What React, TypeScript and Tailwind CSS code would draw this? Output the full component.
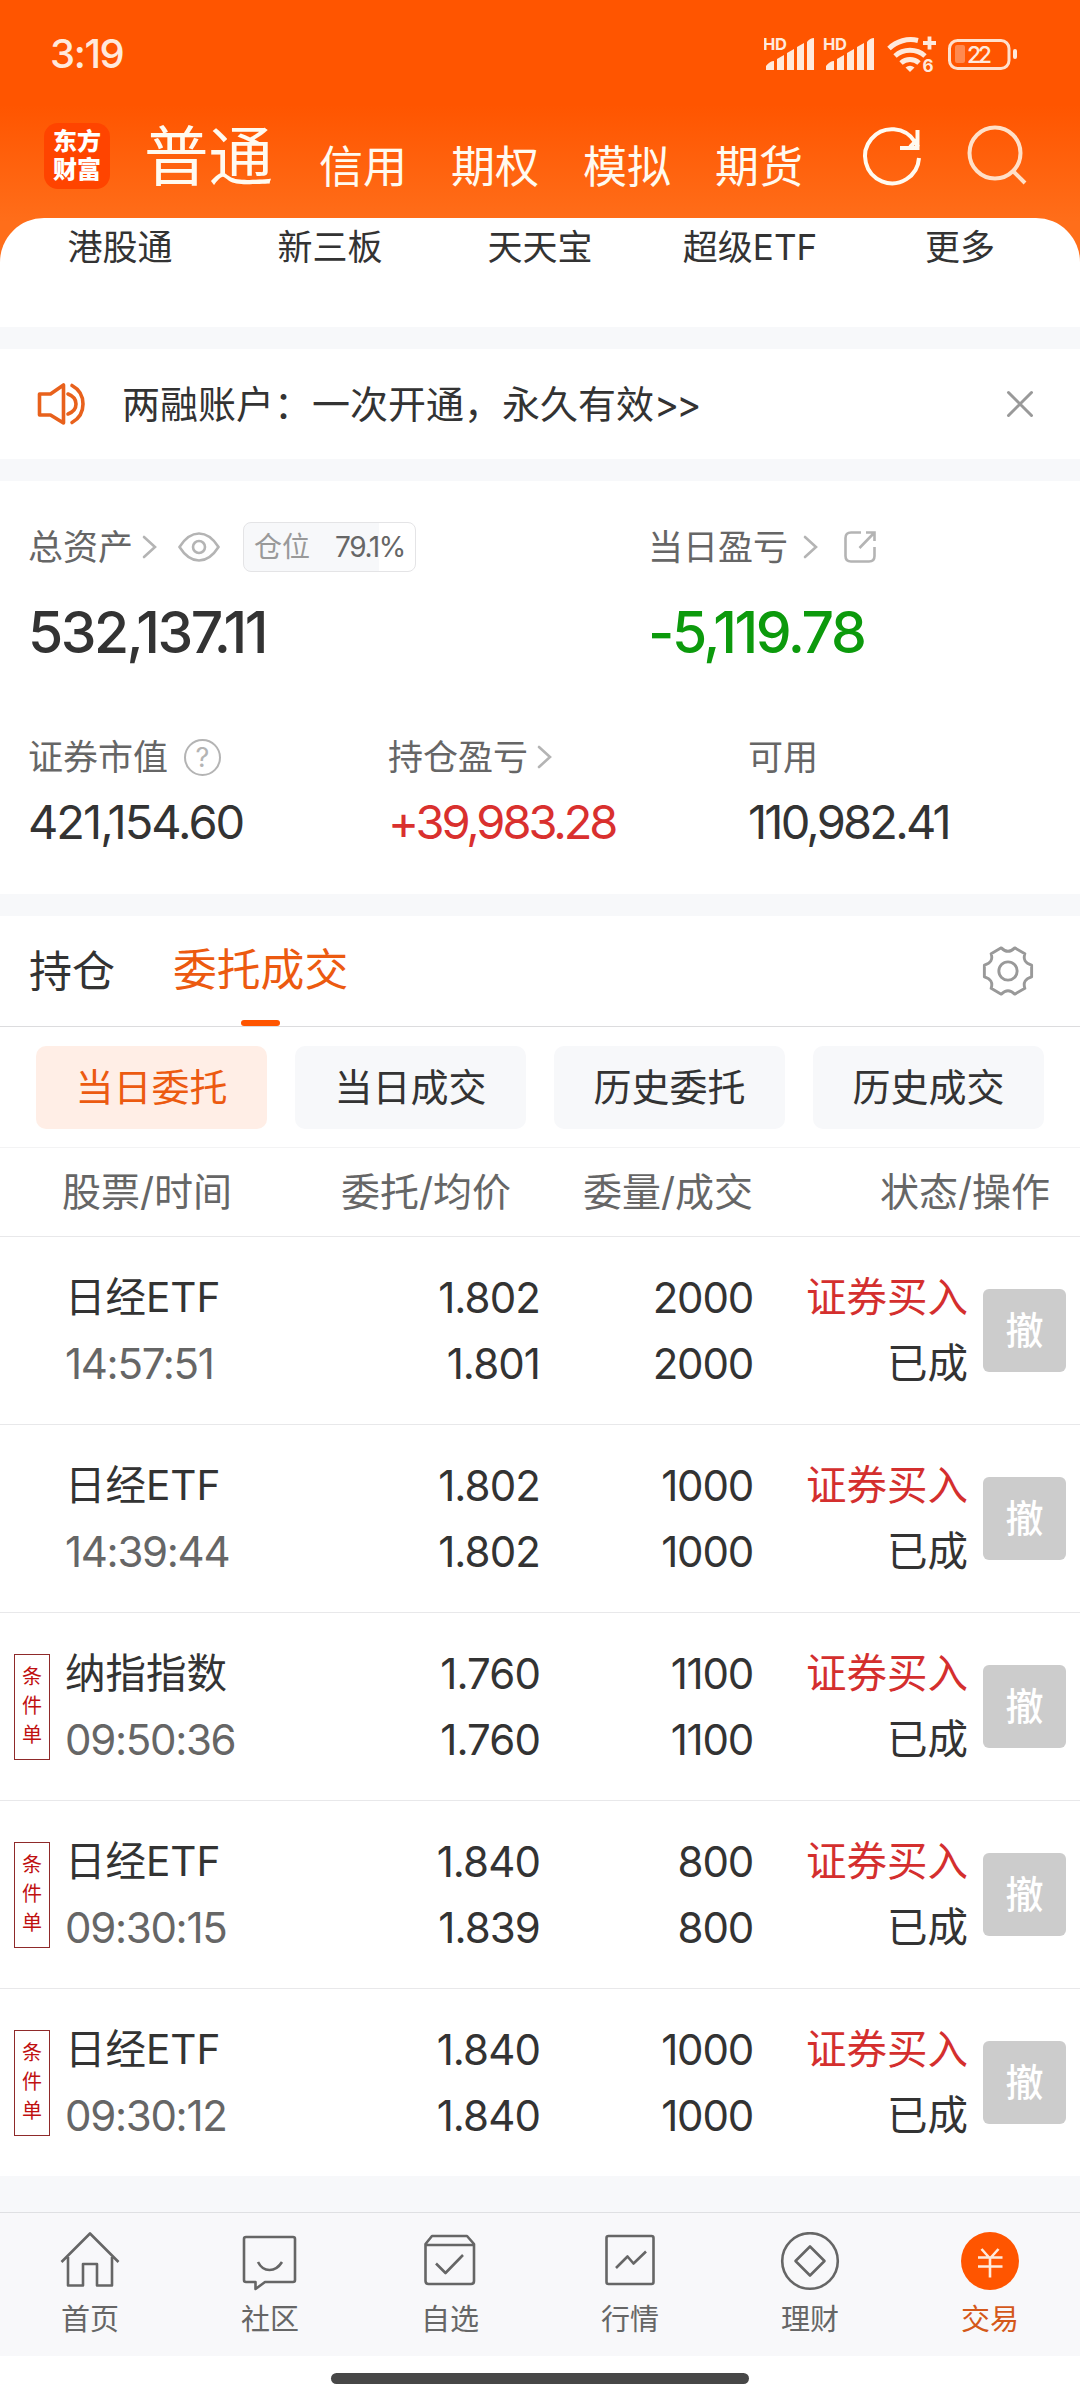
import React from "react";

const shortcuts = ["港股通", "新三板", "天天宝", "超级ETF", "更多"];
const accounts = ["信用", "期权", "模拟", "期货"];
const filters = ["当日委托", "当日成交", "历史委托", "历史成交"];

type Order = {
  name: string;
  time: string;
  price: string;
  avg: string;
  amount: string;
  filled: string;
  conditional?: boolean;
};

const orders: Order[] = [
  { name: "日经ETF", time: "14:57:51", price: "1.802", avg: "1.801", amount: "2000", filled: "2000" },
  { name: "日经ETF", time: "14:39:44", price: "1.802", avg: "1.802", amount: "1000", filled: "1000" },
  { name: "纳指指数", time: "09:50:36", price: "1.760", avg: "1.760", amount: "1100", filled: "1100", conditional: true },
  { name: "日经ETF", time: "09:30:15", price: "1.840", avg: "1.839", amount: "800", filled: "800", conditional: true },
  { name: "日经ETF", time: "09:30:12", price: "1.840", avg: "1.840", amount: "1000", filled: "1000", conditional: true },
];

const Signal = ({ x }: { x: number }) => (
  <g transform={`translate(${x} 0)`}>
    <text x="-1" y="30" fontSize="16.5" fontWeight="700" textLength="24">
      HD
    </text>
    <path d="M2 50v-4q4-5 8-5v9q0 0-1 0zM13 50V39l7-4v15zM23 50V33l7-4v21zM33 50V27l7-4v27zM43 50V22q3-4 7-4v32z" />
  </g>
);

const StatusIcons = () => (
  <svg width="254" height="60" viewBox="0 0 254 60" fill="#ffe9dc">
    <Signal x={0} />
    <Signal x={60} />
    <g fill="none" stroke="#ffe9dc" strokeWidth="5">
      <path d="M125 28.500a31 31 0 0 1 29-8" />
      <path d="M131 36a22.500 22.500 0 0 1 30 0" />
      <path d="M137 43a13.500 13.500 0 0 1 18 0" />
      <path d="M159 23h13M165.500 16.500v13" strokeWidth="3.800" />
    </g>
    <path d="M141.500 47.500q4.500-3.500 9 0L146 52z" />
    <text x="158.500" y="52" fontSize="17" fontWeight="700">
      6
    </text>
    <rect x="185.500" y="20.500" width="59.500" height="28" rx="8" fill="none" stroke="#ffe0cc" strokeWidth="3" />
    <rect x="191" y="25" width="10" height="18" rx="2" fill="#ff8a50" />
    <rect x="249" y="29" width="4" height="10" rx="2" />
    <text x="203" y="43" fontSize="23" fontWeight="500" textLength="25">
      22
    </text>
  </svg>
);

const Header = () => (
  <header className="h-[262px] bg-[linear-gradient(#ff5500_40%,#ff6e1a_85%)]">
    <div className="flex h-[109px] items-start justify-between pl-[50px] pr-[62px]">
      <span className="mt-[34px] text-[40px] font-medium leading-[40px] tracking-[-1.400px] text-[#ffe9dc]">3:19</span>
      <div className="mt-5">
        <StatusIcons />
      </div>
    </div>
    <div className="flex h-[109px] items-start pl-11 text-[#fffaf0]">
      <div className="mt-[14px] flex h-[66px] w-[66px] flex-col items-center justify-center rounded-[14px] bg-[#ff4400] text-[24px] font-black leading-[28px] text-white">
        <span>东方</span>
        <span>财富</span>
      </div>
      <h1 className="ml-[34px] mt-[15px] w-[131px] text-[64.500px] leading-[66px]">普通</h1>
      <nav className="ml-[44px] mt-[34px] flex gap-11 text-[44px] leading-[48px]">
        {accounts.map((item) => (
          <span key={item} className="w-[88px]">
            {item}
          </span>
        ))}
      </nav>
      <svg className="ml-[57px] mt-[14px]" width="66" height="66" viewBox="0 0 66 66" fill="none" stroke="#fffaf0" strokeWidth="4">
        <path d="M59 35a27 27 0 1 1-4-16l3 5" />
        <path d="M57.500 7v18H40M50 24l7-7" />
      </svg>
      <svg className="ml-[37px] mt-[14px]" width="66" height="66" viewBox="0 0 66 66" fill="none" stroke="#ffe0c8" strokeWidth="4">
        <circle cx="32" cy="30" r="25.500" />
        <path d="M49 47l13 13" />
      </svg>
    </div>
  </header>
);

const Chevron = ({ className }: { className: string }) => (
  <svg className={className} width="15" height="24" viewBox="0 0 15 24" fill="none" stroke="#b4b4b4" strokeWidth="2.600" strokeLinecap="round">
    <path d="M2 2l11 10L2 22" />
  </svg>
);

const Notice = () => (
  <section className="flex h-[110px] items-center bg-white pl-[36px] pr-[45px]">
    <svg width="50" height="46" viewBox="0 0 50 46" fill="none" stroke="#e8611c" strokeWidth="3.600" strokeLinecap="round" strokeLinejoin="round">
      <path d="M3.500 13h11l13-9v38l-13-8h-11z" />
      <path d="M32 13q8 3 8 10t-8 10" />
      <path d="M36 4.500q11 6 11 18.500t-11 18.500" />
    </svg>
    <p className="ml-[36px] text-[38px] leading-[50px] text-[#333]">
      两融账户：一次开通，永久有效<span className="tracking-[-3px]">&gt;&gt;</span>
    </p>
    <svg className="ml-auto" width="30" height="30" viewBox="0 0 30 30" stroke="#999" strokeWidth="3" strokeLinecap="round">
      <path d="M3.500 3.500l23 23M26.500 3.500l-23 23" />
    </svg>
  </section>
);

const Assets = () => (
  <section className="h-[413px] bg-white text-[#333]">
    <div className="flex h-[201px] pt-[41px]">
      <div className="w-[620px] pl-[28px]">
        <div className="flex h-[50px] items-center">
          <span className="text-[35px] leading-[50px] text-[#666]">总资产</span>
          <Chevron className="ml-[9px]" />
          <svg className="ml-[21px]" width="42" height="30" viewBox="0 0 42 30" fill="none" stroke="#b4b4b4" strokeWidth="2.600">
            <path d="M1.500 15Q10 1.500 21 1.500T40.500 15Q32 28.500 21 28.500T1.500 15z" />
            <circle cx="21" cy="15" r="6" />
          </svg>
          <div className="ml-[23px] flex h-[50px] w-[173px] items-center rounded-[8px] border border-[#e4e4e6] bg-[linear-gradient(90deg,#f7f8fa_79.1%,#fff_79.1%)] pl-[10px]">
            <span className="text-[28px] leading-[40px] text-[#999]">仓位</span>
            <span className="ml-[25px] text-[28px] leading-[40px] tracking-[-1.4px] text-[#666]">79.1%</span>
          </div>
        </div>
        <p className="mt-[26px] text-[57px] font-medium leading-[70px] tracking-[-2.500px]">532,137.11</p>
      </div>
      <div className="pl-[28px]">
        <div className="flex h-[50px] items-center">
          <span className="text-[35px] leading-[50px] text-[#666]">当日盈亏</span>
          <Chevron className="ml-[15px]" />
          <svg className="ml-[26px]" width="32" height="32" viewBox="0 0 32 32" fill="none" stroke="#b4b4b4" strokeWidth="2.600">
            <path d="M17 1.500H7q-5.500 0-5.500 5.500v18q0 5.500 5.500 5.500h18q5.500 0 5.500-5.500V16" />
            <path d="M22 1.500h8.500V10M30 2L15.500 17" />
          </svg>
        </div>
        <p className="mt-[26px] text-[57px] font-medium leading-[70px] tracking-[-2.400px] text-[#0c9a0c]">-5,119.78</p>
      </div>
    </div>
    <div className="grid grid-cols-[360px_360px_360px] pl-[28px] pt-[50px]">
      <div>
        <div className="flex h-[50px] items-center text-[35px] text-[#666]">
          证券市值
          <span className="ml-[16px] flex h-[37px] w-[37px] items-center justify-center rounded-full border-[2.500px] border-[#b4b4b4] text-[27px] leading-none text-[#b4b4b4]">
            ?
          </span>
        </div>
        <p className="mt-[10px] text-[47px] leading-[60px] tracking-[-2px]">421,154.60</p>
      </div>
      <div>
        <div className="flex h-[50px] items-center text-[35px] text-[#666]">
          持仓盈亏
          <Chevron className="ml-[9px]" />
        </div>
        <p className="mt-[10px] text-[47px] leading-[60px] tracking-[-3.100px] text-[#d9302e]">+39,983.28</p>
      </div>
      <div>
        <div className="flex h-[50px] items-center text-[35px] text-[#666]">可用</div>
        <p className="mt-[10px] text-[47px] leading-[60px] tracking-[-2.800px]">110,982.41</p>
      </div>
    </div>
  </section>
);

const OrderRow = ({ order }: { order: Order }) => (
  <div className="flex h-[188px] items-start border-t border-[#e8e8ea] text-[40px] leading-[66px] text-[#333]">
    <div className="w-[65px] pl-[14px] pt-[41px]">
      {order.conditional && (
        <div className="flex h-[106px] w-[36px] flex-col items-center border border-[#8f2a2a] pt-[8px] text-[20px] leading-[29px] text-[#c01010]">
          <span>条</span>
          <span>件</span>
          <span>单</span>
        </div>
      )}
    </div>
    <div className="w-[245px] pt-[28px]">
      <p className="text-[40.500px]">{order.name}</p>
      <p className="text-[42px] tracking-[-1.300px] text-[#666]">{order.time}</p>
    </div>
    <div className="w-[230px] pt-[28px] text-right text-[42px] tracking-[-0.900px]">
      <p>{order.price}</p>
      <p>{order.avg}</p>
    </div>
    <div className="w-[213px] pt-[28px] text-right text-[42px] tracking-[-1.200px]">
      <p>{order.amount}</p>
      <p>{order.filled}</p>
    </div>
    <div className="w-[215px] pt-[28px] text-right text-[40.500px]">
      <p className="text-[#d42f2e]">证券买入</p>
      <p>已成</p>
    </div>
    <button className="ml-[15px] mt-[52px] h-[83px] w-[83px] rounded-[6px] bg-[#ccc] text-[38px] font-medium leading-[83px] text-white">撤</button>
  </div>
);

const Orders = () => (
  <section className="bg-white">
    <div className="flex h-[111px] items-center border-b border-[#dcdcde] pl-[29px] pr-[45px] text-[43px]">
      <span className="text-[#333]">持仓</span>
      <span className="relative ml-[58px] flex h-full items-center text-[43.800px] text-[#ec5a10]">
        委托成交
        <i className="absolute bottom-0 left-[68px] h-[6px] w-[39px] rounded-[3px] bg-[#ff5500]" />
      </span>
      <svg className="ml-auto" width="54" height="54" viewBox="-1 -1 56 56" fill="none" stroke="#999" strokeWidth="3" strokeLinejoin="round">
        <path d="M20 3Q27 10 34 3L44.500 9Q41.500 18 51.500 21V33Q41.500 36 44.500 45L34 51Q27 44 20 51L9.500 45Q12.500 36 2.500 33V21Q12.500 18 9.500 9z" />
        <circle cx="27" cy="27" r="9.500" />
      </svg>
    </div>
    <div className="flex h-[120px] items-start gap-7 pl-9 pt-[19px]">
      {filters.map((item, i) => (
        <button
          key={item}
          className={
            i === 0
              ? "h-[83px] w-[231px] rounded-[10px] bg-[#ffeee6] text-[38px] text-[#ec5a10]"
              : "h-[83px] w-[231px] rounded-[10px] bg-[#f7f8fa] text-[38px] text-[#333]"
          }
        >
          {item}
        </button>
      ))}
    </div>
    <div className="flex h-[89px] items-center border-t border-[#f3f3f4] text-[39px] text-[#666]">
      <span className="w-[280px] pl-[62px]">股票/时间</span>
      <span className="w-[231px] text-right">委托/均价</span>
      <span className="w-[242px] text-right">委量/成交</span>
      <span className="w-[297px] text-right">状态/操作</span>
    </div>
    {orders.map((order) => (
      <OrderRow key={order.time} order={order} />
    ))}
  </section>
);

const tabs = [
  {
    label: "首页",
    icon: <path d="M1.500 30L30 1.500 58.500 30M8 25v28.500h15V32h14v21.500h15V25" />,
  },
  {
    label: "社区",
    icon: (
      <>
        <path d="M6 5h47q2 0 2 2v41q0 2-2 2H25l-9.500 7v-7H6q-2 0-2-2V7q0-2 2-2z" />
        <path d="M18 30q4 8 11.500 8T42 30" />
      </>
    ),
  },
  {
    label: "自选",
    icon: (
      <>
        <path d="M5.500 12l6.500-8h35l7 8v37q0 3-3 3H8.500q-3 0-3-3zM6 13h47.500" />
        <path d="M16 31.500l9.500 9.500L43 23" />
      </>
    ),
  },
  {
    label: "行情",
    icon: (
      <>
        <rect x="6.500" y="4" width="47" height="48" rx="2" />
        <path d="M16 36l11.500-11.500 6 7L46 19.500" />
      </>
    ),
  },
  {
    label: "理财",
    icon: (
      <>
        <circle cx="30" cy="29" r="27.800" />
        <path d="M30 14.500L44.500 29 30 43.500 15.500 29z" />
      </>
    ),
  },
  {
    label: "交易",
    active: true,
    icon: (
      <>
        <circle cx="30" cy="29" r="29" fill="#ff5500" stroke="none" />
        <path d="M21.500 17l8.500 9.500 8.500-9.500M30 26v19.500M18 25.500h24.500M18 34.500h24.500" stroke="#ffeadb" />
      </>
    ),
  },
];

const TabBar = () => (
  <nav className="grid h-[144px] grid-cols-6 border-t border-[#dfe0e3] bg-[#f8f8fa]">
    {tabs.map((tab) => (
      <div key={tab.label} className="flex flex-col items-center pt-[19px]">
        <svg width="60" height="60" viewBox="0 0 60 60" fill="none" stroke="#666" strokeWidth="2.600" strokeLinejoin="round">
          {tab.icon}
        </svg>
        <span className={tab.active ? "mt-[8px] text-[29px] leading-[40px] text-[#d4581a]" : "mt-[8px] text-[29px] leading-[40px] text-[#666]"}>
          {tab.label}
        </span>
      </div>
    ))}
  </nav>
);

const App = () => {
  return (
    <div className="h-[2400px] w-[1080px] overflow-hidden bg-[#f7f8fa] font-['Inter','Noto_Sans_CJK_SC',sans-serif]">
      <Header />
      <div className="-mt-11 grid h-[109px] grid-cols-5 rounded-t-[44px] bg-white px-[15px] pt-[4px] text-center text-[35px] leading-[50px] text-[#333]">
        {shortcuts.map((item) => (
          <span key={item}>{item}</span>
        ))}
      </div>
      <div className="h-[22px]" />
      <Notice />
      <div className="h-[22px]" />
      <Assets />
      <div className="h-[22px]" />
      <Orders />
      <div className="h-[36px]" />
      <TabBar />
      <div className="flex h-[44px] justify-center bg-white pt-[17px]">
        <div className="h-[11px] w-[418px] rounded-full bg-[#474747]" />
      </div>
    </div>
  );
};

export default App;
